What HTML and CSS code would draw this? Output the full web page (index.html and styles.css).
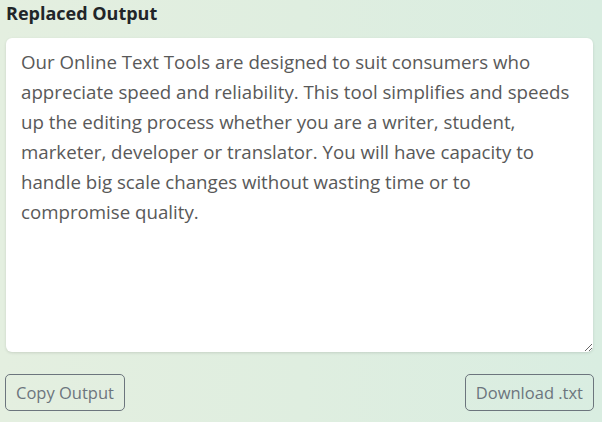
FILE: index.html
```html
<!DOCTYPE html>
<html>
<head>
<meta charset="utf-8">
<link rel="stylesheet" href="styles.css">
</head>
<body>
<div class="panel">
  <label class="title" for="out">Replaced Output</label>
  <textarea id="out" class="output" readonly>Our Online Text Tools are designed to suit consumers who appreciate speed and reliability. This tool simplifies and speeds up the editing process whether you are a writer, student, marketer, developer or translator. You will have capacity to handle big scale changes without wasting time or to compromise quality.</textarea>
  <div class="actions">
    <button class="btn">Copy Output</button>
    <button class="btn">Download .txt</button>
  </div>
</div>
</body>
</html>
```

FILE: styles.css
```css
html, body {
  margin: 0;
  height: 100%;
}
body {
  background: linear-gradient(90deg, #e4efe0 0%, #dfeee0 50%, #d9ede1 100%);
  font-family: "Open Sans", "Noto Sans", sans-serif;
  color: #212529;
  overflow: hidden;
}
.panel {
  display: flex;
  flex-direction: column;
  padding: 1px 8px 0 5px;
}
.title {
  font-weight: 700;
  font-size: 18px;
  line-height: 25px;
  margin-left: 1px;
  margin-bottom: 12px;
}
.output {
  box-sizing: border-box;
  margin: 0 1px;
  height: 314px;
  border: none;
  border-radius: 6px;
  background: #fff;
  box-shadow: 0 1px 3px rgba(0, 0, 0, 0.12);
  padding: 9px 15px;
  font-family: "Open Sans", "Noto Sans", sans-serif;
  font-size: 18.7px;
  line-height: 30px;
  color: #595959;
  outline: none;
  resize: vertical;
}
.actions {
  display: flex;
  justify-content: space-between;
  margin-top: 22px;
}
.btn {
  height: 37px;
  padding: 0 10px;
  background: transparent;
  border: 1px solid #6c757d;
  border-radius: 5px;
  color: #6c757d;
  font-family: "Open Sans", "Noto Sans", sans-serif;
  font-size: 16.5px;
}
```
